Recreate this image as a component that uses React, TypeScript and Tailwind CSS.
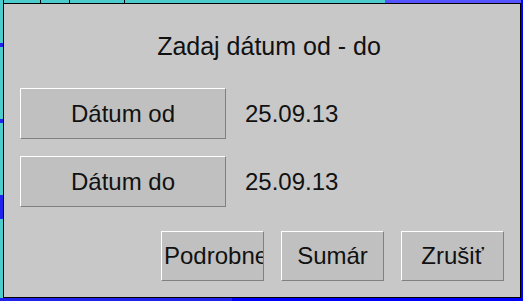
import React from 'react';

const font = { fontFamily: '"Liberation Sans", Arial, sans-serif' };

function Btn({ label, className }: { label: string; className: string }) {
    return (
        <button
            className={`bg-[#c0c0c0] border border-t-white border-l-white border-r-[#808080] border-b-[#808080] text-[24px] text-[#111] overflow-hidden whitespace-nowrap flex items-center justify-center ${className}`}
        >
            {label}
        </button>
    );
}

export default function App() {
    return (
        <div className="relative w-[523px] h-[301px] overflow-hidden bg-[#c8c8c8]" style={font}>
            {/* app behind the dialog */}
            <div className="flex h-[3px]">
                <div className="w-[385px] bg-[#4ccccc] flex">
                    <div className="w-[4px] border-r border-black" />
                    <div className="w-[37px] border-r border-black" />
                    <div className="w-[29px] border-r border-black" />
                    <div className="w-[55px] border-r border-black" />
                </div>
                <div className="flex-1 bg-[#5555ff]" />
            </div>
            <div className="absolute left-0 top-[3px] bottom-0 w-[3px] flex flex-col bg-[#4ccccc]">
                <div className="h-[40px]" />
                <div className="h-[4px] bg-[#2222ee]" />
                <div className="h-[72px]" />
                <div className="h-[4px] bg-[#2222ee]" />
                <div className="h-[72px]" />
                <div className="h-[24px] bg-[#2222ee]" />
                <div className="flex-1" />
            </div>
            <div className="absolute left-0 right-0 bottom-0 h-[3px] flex">
                <div className="w-[232px] bg-[#2222ee]" />
                <div className="flex-1 bg-[#0000ff]" />
            </div>
            <div className="absolute right-0 top-0 bottom-0 w-[2px] bg-[#0000ff]" />

            {/* dialog */}
            <div className="absolute left-[3px] top-[3px] w-[518px] h-[295px] bg-[#c8c8c8] border border-black text-[#111]">
                <div className="text-[25px] text-center mt-[27px] leading-[30px] pl-[14px]">Zadaj dátum od - do</div>
                <div className="flex flex-col gap-[17px] mt-[27px] ml-[16px]">
                    <div className="flex items-center">
                        <Btn label="Dátum od" className="w-[206px] h-[51px]" />
                        <span className="ml-[19px] text-[24px]">25.09.13</span>
                    </div>
                    <div className="flex items-center">
                        <Btn label="Dátum do" className="w-[206px] h-[51px]" />
                        <span className="ml-[19px] text-[24px]">25.09.13</span>
                    </div>
                </div>
                <div className="flex justify-end gap-[17px] mt-[24px] mr-[16px]">
                    <Btn label="Podrobne" className="w-[103px] h-[50px] !justify-start pl-[2px]" />
                    <Btn label="Sumár" className="w-[103px] h-[50px]" />
                    <Btn label="Zrušiť" className="w-[103px] h-[50px]" />
                </div>
            </div>
        </div>
    );
}
